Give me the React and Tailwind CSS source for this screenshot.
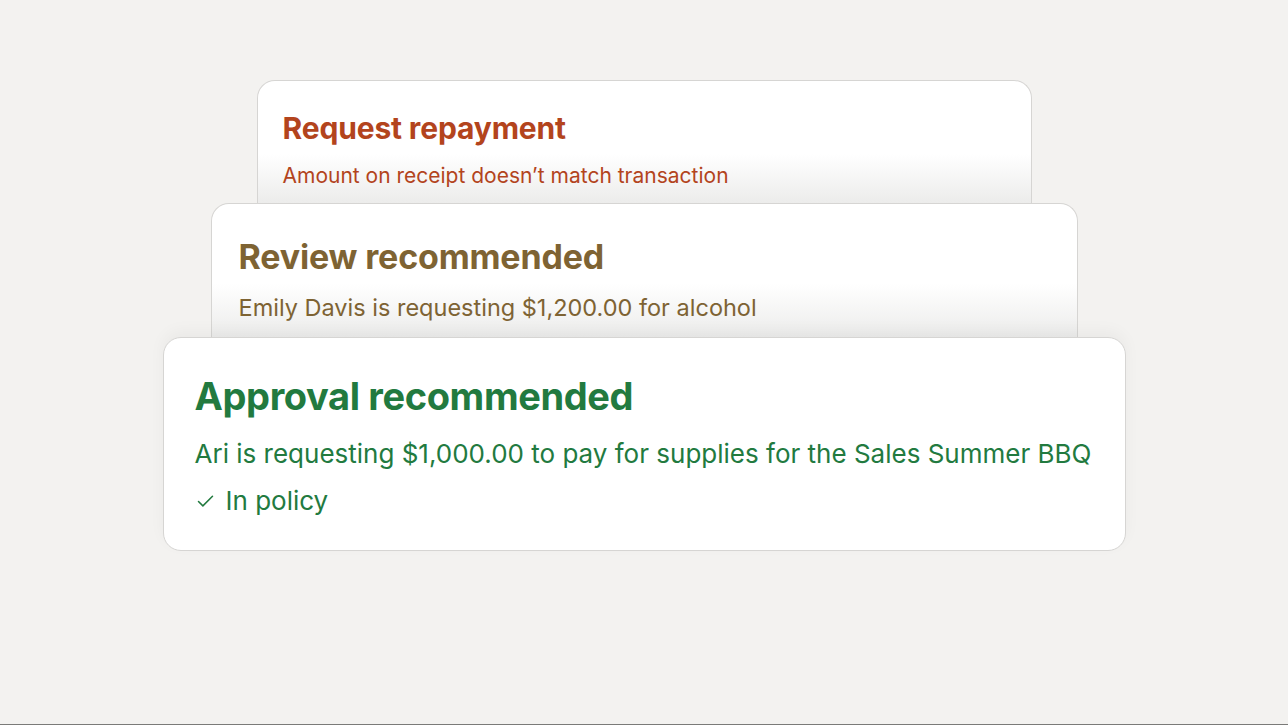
import { Check } from 'lucide-react'

const FONT = { fontFamily: 'Inter, "Noto Sans", sans-serif' }

export default function App() {
  return (
    <div
      className="h-[725px] w-full bg-[#f3f2f0] border-b border-[#7a7a78] flex flex-col items-center pt-[80px] overflow-hidden"
      style={FONT}
    >
      {/* Back card — only top part shows */}
      <div className="w-[775px] h-[123px] shrink-0 rounded-t-[18px] border-[1.5px] border-b-0 border-[#d6d5d3] bg-gradient-to-b from-white from-60% to-[#ececeb] px-[25px] pt-[29px]">
        <h2 className="text-[30px] leading-[36px] font-bold tracking-[-0.005em] text-[#b3441d]">Request repayment</h2>
        <p className="mt-[17px] text-[21px] leading-[26px] text-[#b3441d]">
          Amount on receipt doesn’t match transaction
        </p>
      </div>

      {/* Middle card */}
      <div className="w-[867px] h-[134px] shrink-0 rounded-t-[18px] border-[1.5px] border-b-0 border-[#d6d5d3] bg-gradient-to-b from-white from-60% to-[#ececeb] px-[27px] pt-[33px]">
        <h2 className="text-[34px] leading-[40px] font-bold tracking-[-0.005em] text-[#7e6333]">Review recommended</h2>
        <p className="mt-[17px] text-[23.5px] leading-[28px] text-[#7e6333]">
          Emily Davis is requesting $1,200.00 for alcohol
        </p>
      </div>

      {/* Front card */}
      <div className="w-[963px] h-[214px] shrink-0 rounded-[18px] border-[1.5px] border-[#d6d5d3] bg-white px-[31px] pt-[36px] shadow-[0_-6px_16px_rgba(0,0,0,0.04)]">
        <h2 className="text-[38px] leading-[44px] font-bold tracking-[-0.01em] text-[#227a3f]">Approval recommended</h2>
        <p className="mt-[20px] text-[26px] leading-[32px] text-[#227a3f]">
          Ari is requesting $1,000.00 to pay for supplies for the Sales Summer BBQ
        </p>
        <div className="mt-[15px] flex items-center gap-[10px] text-[26px] leading-[32px] text-[#227a3f]">
          <Check size={21} strokeWidth={1.75} />
          <span>In policy</span>
        </div>
      </div>
    </div>
  )
}
